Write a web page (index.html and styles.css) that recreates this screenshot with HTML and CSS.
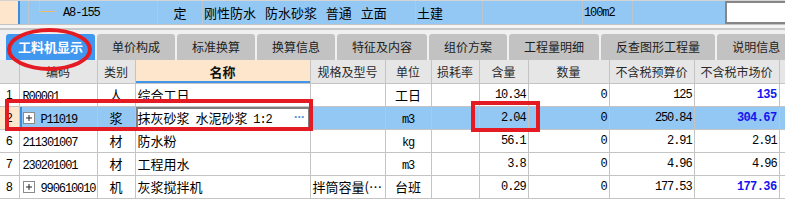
FILE: index.html
```html
<!DOCTYPE html>
<html>
<head>
<meta charset="utf-8">
<link rel="stylesheet" href="styles.css">
</head>
<body>
<div class="page">
  <div class="toprow">
    <div class="tc c0"></div>
    <div class="tc c1"></div>
    <div class="tc c2"><span class="tree"></span><span class="mono code">A8-155</span></div>
    <div class="tc c3">定</div>
    <div class="tc c4">刚性防水 防水砂浆 普通 立面</div>
    <div class="tc c5">土建</div>
    <div class="tc c6"></div>
    <div class="tc c7"><span class="mono">100m2</span></div>
    <div class="tc c8"></div>
    <div class="tc c9"></div>
  </div>
  <div class="splitter"></div>
  <div class="tabs">
    <div class="tab active">工料机显示</div>
    <div class="tab">单价构成</div>
    <div class="tab">标准换算</div>
    <div class="tab">换算信息</div>
    <div class="tab">特征及内容</div>
    <div class="tab">组价方案</div>
    <div class="tab">工程量明细</div>
    <div class="tab">反查图形工程量</div>
    <div class="tab">说明信息</div>
  </div>
  <table class="grid">
    <colgroup>
      <col class="w-rn"><col class="w-code"><col class="w-type"><col class="w-name"><col class="w-spec"><col class="w-unit"><col class="w-loss"><col class="w-qty"><col class="w-amt"><col class="w-price"><col class="w-mkt"><col class="w-end">
    </colgroup>
    <thead>
      <tr>
        <th></th><th>编码</th><th>类别</th><th class="hname">名称</th><th>规格及型号</th><th>单位</th><th>损耗率</th><th>含量</th><th>数量</th><th>不含税预算价</th><th>不含税市场价</th><th></th>
      </tr>
    </thead>
    <tbody>
      <tr>
        <td class="rn">1</td><td class="code"><span class="mono">R00001</span></td><td class="ctr">人</td><td class="name">综合工日</td><td></td><td class="ctr">工日</td><td></td><td class="num">10.34</td><td class="num">0</td><td class="num">125</td><td class="num hl">135</td><td></td>
      </tr>
      <tr class="sel">
        <td class="rn">2</td><td class="code codesel"><span class="exp"><svg width="12" height="12" viewBox="0 0 12 12"><rect x="0.5" y="0.5" width="11" height="11" fill="#fff" stroke="#8a8a8a"/><path d="M3 6H9M6 3V9" stroke="#222" stroke-width="1"/></svg></span><span class="mono">P11019</span></td><td class="ctr">浆</td><td class="name edit"><span class="nametext">抹灰砂浆 水泥砂浆 <span class="mono">1:2</span></span><span class="dots">···</span></td><td></td><td class="ctr"><span class="mono">m3</span></td><td></td><td class="num">2.04</td><td class="num">0</td><td class="num">250.84</td><td class="num hl">304.67</td><td></td>
      </tr>
      <tr>
        <td class="rn">6</td><td class="code"><span class="mono">211301007</span></td><td class="ctr">材</td><td class="name">防水粉</td><td></td><td class="ctr"><span class="mono">kg</span></td><td></td><td class="num">56.1</td><td class="num">0</td><td class="num">2.91</td><td class="num">2.91</td><td></td>
      </tr>
      <tr>
        <td class="rn">7</td><td class="code"><span class="mono">230201001</span></td><td class="ctr">材</td><td class="name">工程用水</td><td></td><td class="ctr"><span class="mono">m3</span></td><td></td><td class="num">3.8</td><td class="num">0</td><td class="num">4.96</td><td class="num">4.96</td><td></td>
      </tr>
      <tr>
        <td class="rn">8</td><td class="code"><span class="exp"><svg width="12" height="12" viewBox="0 0 12 12"><rect x="0.5" y="0.5" width="11" height="11" fill="#fff" stroke="#8a8a8a"/><path d="M3 6H9M6 3V9" stroke="#222" stroke-width="1"/></svg></span><span class="mono">990610010</span></td><td class="ctr">机</td><td class="name">灰浆搅拌机</td><td class="name">拌筒容量(…</td><td class="ctr">台班</td><td></td><td class="num">0.29</td><td class="num">0</td><td class="num">177.53</td><td class="num hl">177.36</td><td></td>
      </tr>
    </tbody>
  </table>
  <div class="ann ellipse"></div>
  <div class="ann box1"></div>
  <div class="ann box2"></div>
</div>
</body>
</html>
```

FILE: styles.css
```css
* { box-sizing: border-box; margin: 0; padding: 0; }
body {
  margin: 0;
  width: 785px;
  height: 222px;
  overflow: hidden;
  background: #fff;
  font-family: "Noto Sans CJK SC", "Noto Sans", sans-serif;
  font-size: 13px;
  color: #000;
}
.page { position: relative; width: 785px; height: 222px; overflow: hidden; }
.mono {
  font-family: "Liberation Mono", "DejaVu Sans Mono", monospace;
  font-size: 12px;
  letter-spacing: -1.1px;
}

/* top row */
.toprow {
  display: flex;
  height: 25px;
  border-top: 1px solid #d4d4d4;
  border-bottom: 1px solid #c4c4c4;
  background: #93c8f4;
}
.tc {
  height: 100%;
  border-right: 1px solid #bcc6d0;
  display: flex;
  align-items: center;
  white-space: nowrap;
  overflow: hidden;
  flex: none;
}
.c0 { width: 20px; background: #fde6cc; border-right: 2px solid #3b8de0; }
.c1 { width: 9px; }
.c2 { width: 129px; }
.tree {
  align-self: flex-start;
  width: 16px;
  height: 12px;
  margin-left: 10px;
  margin-top: -1px;
  border-left: 1px solid #f2bc66;
  border-bottom: 1px solid #f2bc66;
}
.c2 .code { margin-left: 5px; }
.c3 { width: 45px; justify-content: center; }
.c4 { width: 213px; padding-left: 1px; word-spacing: 6px; }
.c5 { width: 67px; padding-left: 1px; }
.c6 { width: 100px; }
.c7 { width: 50px; padding-left: 1px; }
.c8 { width: 92px; border-right: none; }
.c9 { flex: 1; background: #fff; border: 2px solid #868686; border-right: none; }

.splitter {
  height: 5px;
  background: #f5f5f5;
  border-bottom: 2px solid #c8c8c8;
}

/* tabs */
.tabs {
  height: 30px;
  background: #f0f0f0;
  display: flex;
  align-items: flex-end;
  gap: 2px;
  padding-left: 6px;
  overflow: hidden;
}
.tab {
  flex: none;
  height: 26px;
  line-height: 26px;
  padding: 0 15px;
  background: #c2c2c2;
  border-radius: 3px 3px 0 0;
  font-size: 12px;
  color: #1c1c1c;
  white-space: nowrap;
}
.tab.active {
  background: #3f97ef;
  color: #fff;
  font-weight: bold;
  font-size: 13px;
  padding: 0 12px;
}

/* grid */
.grid {
  width: 785px;
  border-collapse: collapse;
  table-layout: fixed;
}
.w-rn { width: 19px; }
.w-code { width: 78px; }
.w-type { width: 38px; }
.w-name { width: 175px; }
.w-spec { width: 75px; }
.w-unit { width: 46px; }
.w-loss { width: 48px; }
.w-qty { width: 49px; }
.w-amt { width: 81px; }
.w-price { width: 85px; }
.w-mkt { width: 85px; }
.w-end { width: 6px; }

.grid th, .grid td {
  border: 1px solid #c4c4c4;
  padding: 0;
  white-space: nowrap;
  overflow: hidden;
}
.grid th:first-child, .grid td:first-child { border-left: none; }
.grid th:last-child, .grid td:last-child { border-right: none; }
.grid thead th {
  border-top: none;
  height: 23px;
  background: #e6e6e6;
  font-size: 12px;
  font-weight: normal;
  color: #2a2a2a;
  text-align: center;
}
.grid thead th.hname {
  background: #fde6cc;
  font-weight: bold;
  font-size: 13px;
  color: #111;
  box-shadow: inset 0 -2px 0 #4096e8;
}
.grid tbody td { height: 23px; }
.rn { text-align: center; font-family: "Liberation Sans", sans-serif; font-size: 12px; }
.code { padding-left: 3px !important; }
.ctr { text-align: center; }
.name { padding-left: 2px !important; word-spacing: 3px; }
.num {
  text-align: right;
  padding-right: 2px !important;
  font-family: "Liberation Mono", "DejaVu Sans Mono", monospace;
  font-size: 12px;
  letter-spacing: -1.1px;
}
.hl { color: #1414f0; font-weight: bold; letter-spacing: -0.6px; }
.exp { display: inline-block; vertical-align: middle; margin-right: 6px; line-height: 0; position: relative; top: -1px; }

.sel td { background: #93c8f4; }
.sel td.rn { background: #fde6cc; }
.sel td.codesel { box-shadow: inset 2px 0 0 #3b8de0; }
.sel td.edit {
  background: #fff;
  box-shadow: inset 0 0 0 2px #808080;
  position: relative;
}
.dots {
  position: absolute;
  right: 5px;
  top: 3px;
  color: #4a8fd4;
  font-family: "Liberation Sans", sans-serif;
  font-weight: bold;
  font-size: 12px;
  letter-spacing: -0.5px;
  word-spacing: 0;
}

/* annotations */
.ann { position: absolute; border: 4px solid #e41b23; }
.ellipse { left: 7px; top: 28px; width: 85px; height: 43px; border-radius: 50%; }
.box1 { left: 5px; top: 99px; width: 308px; height: 32px; }
.box2 { left: 471px; top: 101px; width: 69px; height: 31px; }
```
